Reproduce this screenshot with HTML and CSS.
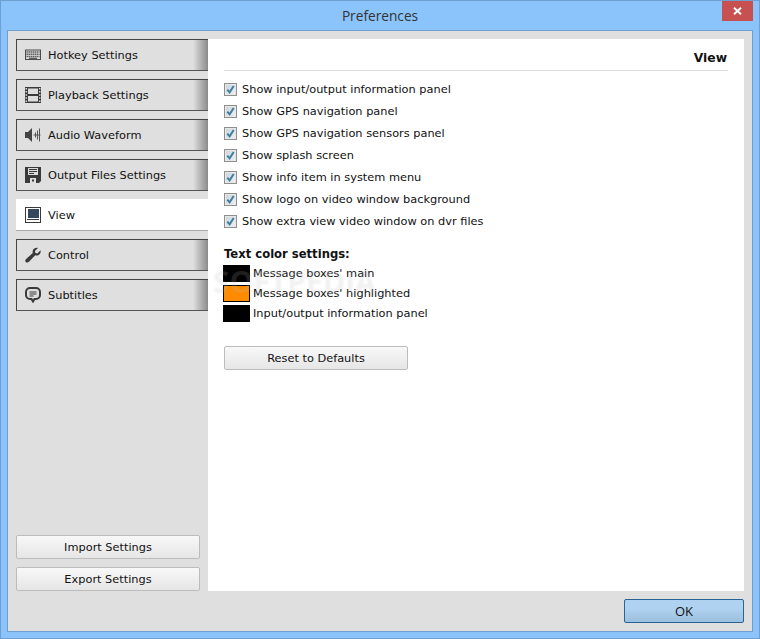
FILE: index.html
```html
<!DOCTYPE html>
<html lang="en">
<head>
<meta charset="utf-8">
<title>Preferences</title>
<link rel="stylesheet" href="styles.css">
</head>
<body>
<div class="window">
  <header class="titlebar">
    <span class="title">Preferences</span>
    <button class="close" aria-label="Close"><svg width="9" height="8" viewBox="0 0 9 8"><path d="M1 .8 L8 7.200 M8 .8 L1 7.200" stroke="#fff" stroke-width="1.900"/></svg></button>
  </header>
  <div class="panel">
    <div class="main">
      <aside class="sidebar">
        <nav class="tabs">
          <div class="tab"><svg class="icon" viewBox="0 0 16 16"><path fill="#4a4a4a" d="M0 2.500h16v10.500H0z"/><path fill="#ddd" d="M1 3.500h14v8.500H1z"/><path stroke="#555" stroke-width="1.500" stroke-dasharray="1.400 .6" d="M1.500 5h13M1.500 7.200h13M1.500 9.400h13"/><path stroke="#555" stroke-width="1.200" d="M4 11.300h8"/></svg><span>Hotkey Settings</span></div>
          <div class="tab"><svg class="icon" viewBox="0 0 16 16"><path fill="#3a3a3a" d="M0 0h16v16H0z"/><path fill="#ddd" d="M3 1.500h10v5.500H3zM3 9h10v5.500H3z"/><path stroke="#ddd" stroke-width="1.500" stroke-dasharray="1.500 1.600" d="M1.300 1v14M14.700 1v14"/></svg><span>Playback Settings</span></div>
          <div class="tab"><svg class="icon" viewBox="0 0 16 16"><path fill="#444" d="M0 5h3l4-4v14l-4-4H0z"/><path stroke="#555" fill="none" d="M8.500 8h7M10.500 5.500v5M12.500 3.500v9M14.500 1.500v13"/></svg><span>Audio Waveform</span></div>
          <div class="tab"><svg class="icon" viewBox="0 0 16 16"><path fill="#3a3a3a" d="M0 0h16v14l-2 2H0z"/><path fill="#ddd" d="M3 1h10v7H3zM5 11h6v5H5z"/><path stroke="#3a3a3a" d="M4 2.500h8M4 4.500h8M4 6.500h5"/><path fill="#3a3a3a" d="M7 12.500h2v2H7z"/></svg><span>Output Files Settings</span></div>
          <div class="tab active"><svg class="icon" viewBox="0 0 16 16"><path fill="#3a3a3a" d="M0 0h16v16H0z"/><path fill="#fff" d="M1 1h14v14H1z"/><path fill="#34495e" d="M3 2h11v9H3z"/><path fill="#3a3a3a" d="M2 12h12v1H2z"/></svg><span>View</span></div>
          <div class="tab"><svg class="icon" viewBox="0 0 16 16"><path fill="#3a3a3a" d="M15.500 3.200c.6 2.300-.4 4.500-2.800 5.200-1 .3-1.800.1-2.500-.1L4 14.800c-1 1-2.400 1-3.200.2s-.7-2 .3-3l6.700-6c-.2-.8-.3-1.700 0-2.600.8-2.100 3-3 5.200-2.400L9.900 3.900l.5 2 2 .5z"/></svg><span>Control</span></div>
          <div class="tab"><svg class="icon" viewBox="0 0 16 16"><path fill="none" stroke="#3a3a3a" stroke-width="2" d="M5 1h6a4 4 0 0 1 4 4v3a4 4 0 0 1-4 4H9.500L8 14.500 6.500 12H5a4 4 0 0 1-4-4V5a4 4 0 0 1 4-4z"/><path stroke="#3a3a3a" d="M4.500 5h7M4.500 7h7M4.500 9h4"/></svg><span>Subtitles</span></div>
        </nav>
        <div class="side-actions">
          <button class="btn">Import Settings</button>
          <button class="btn">Export Settings</button>
        </div>
      </aside>
      <main class="content">
        <h1 class="heading">View</h1>
        <ul class="checks">
          <li><span class="check"><svg viewBox="0 0 9 9" width="9" height="9"><path d="M1.300 4.700 3.600 7.300 7.700 1" fill="none" stroke="#3f7f9f" stroke-width="2"/></svg></span>Show input/output information panel</li>
          <li><span class="check"><svg viewBox="0 0 9 9" width="9" height="9"><path d="M1.300 4.700 3.600 7.300 7.700 1" fill="none" stroke="#3f7f9f" stroke-width="2"/></svg></span>Show GPS navigation panel</li>
          <li><span class="check"><svg viewBox="0 0 9 9" width="9" height="9"><path d="M1.300 4.700 3.600 7.300 7.700 1" fill="none" stroke="#3f7f9f" stroke-width="2"/></svg></span>Show GPS navigation sensors panel</li>
          <li><span class="check"><svg viewBox="0 0 9 9" width="9" height="9"><path d="M1.300 4.700 3.600 7.300 7.700 1" fill="none" stroke="#3f7f9f" stroke-width="2"/></svg></span>Show splash screen</li>
          <li><span class="check"><svg viewBox="0 0 9 9" width="9" height="9"><path d="M1.300 4.700 3.600 7.300 7.700 1" fill="none" stroke="#3f7f9f" stroke-width="2"/></svg></span>Show info item in system menu</li>
          <li><span class="check"><svg viewBox="0 0 9 9" width="9" height="9"><path d="M1.300 4.700 3.600 7.300 7.700 1" fill="none" stroke="#3f7f9f" stroke-width="2"/></svg></span>Show logo on video window background</li>
          <li><span class="check"><svg viewBox="0 0 9 9" width="9" height="9"><path d="M1.300 4.700 3.600 7.300 7.700 1" fill="none" stroke="#3f7f9f" stroke-width="2"/></svg></span>Show extra view video window on dvr files</li>
        </ul>
        <h2 class="subhead">Text color settings:</h2>
        <ul class="colors">
          <li><span class="swatch"></span>Message boxes' main</li>
          <li><span class="swatch orange"></span>Message boxes' highlighted</li>
          <li><span class="swatch"></span>Input/output information panel</li>
        </ul>
        <button class="btn reset">Reset to Defaults</button>
        <div class="watermark">SOFTPEDIA</div>
      </main>
    </div>
    <footer class="footer">
      <button class="ok">OK</button>
    </footer>
  </div>
</div>
</body>
</html>
```
FILE: styles.css
```css
* { box-sizing: border-box; }
html, body { margin: 0; padding: 0; }
body { font-family: "DejaVu Sans", Verdana, sans-serif; font-size: 11.35px; color: #111; }
.window {
  width: 760px; height: 639px;
  background: #8ac4fb;
  border: 1px solid #6f9fd0;
  display: flex; flex-direction: column;
  padding: 0 6px 6px;
}
.titlebar { height: 29px; flex: none; display: flex; align-items: center; justify-content: center; position: relative; }
.title { font-family: "Open Sans", sans-serif; font-size: 13.7px; color: #333; }
.close {
  position: absolute; right: 0; top: 0;
  width: 31px; height: 20px;
  background: #c75050; border: 0; padding: 0;
  display: flex; align-items: center; justify-content: center;
}
.panel {
  flex: 1; min-height: 0;
  background: #dfdfdf;
  border: 1px solid #6f9fd0;
  display: flex; flex-direction: column;
  padding: 8px;
}
.main { flex: 1; min-height: 0; display: flex; }
.sidebar { width: 192px; flex: none; display: flex; flex-direction: column; justify-content: space-between; }
.tabs { display: flex; flex-direction: column; gap: 8px; }
.tab {
  height: 32px; display: flex; align-items: center;
  padding-left: 8px; gap: 7px;
  border: 1px solid #444; border-right: 0;
  border-bottom-color: #555;
  background: linear-gradient(to right, #dfdfdf 0, #dfdfdf 176px, #8a8a8a 191px);
  color: #111;
}
.tab.active { background: #fff; border: 0; border-top: 1px solid #fff; border-bottom: 1px solid #aaa; padding-left: 9px; }
.icon { width: 16px; height: 16px; flex: none; }
.side-actions { display: flex; flex-direction: column; gap: 8px; }
.btn {
  width: 184px; height: 24px;
  font: 11.35px "DejaVu Sans", Verdana, sans-serif; color: #111;
  border: 1px solid #bcbcbc; border-radius: 2px;
  background: linear-gradient(#f8f8f8, #e6e6e6);
  padding: 0;
}
.content { flex: 1; background: #fff; padding: 0 16px; min-width: 0; position: relative; }
.heading {
  margin: 0; height: 32px;
  font-size: 12.3px; font-weight: 700; color: #111;
  text-align: right; line-height: 39px;
  border-bottom: 1px solid #ddd;
  padding-right: 1px;
}
.checks, .colors { list-style: none; margin: 0; padding: 0; }
.checks { margin-top: 7px; }
.checks li { height: 22px; display: flex; align-items: center; gap: 5px; }
.check {
  width: 13px; height: 13px; flex: none;
  border: 1px solid #8f8f8f;
  background: linear-gradient(135deg, #c9d3da, #eef1f3);
  box-shadow: inset 0 0 0 1px #e8e8e8;
  display: flex; align-items: center; justify-content: center;
}
.subhead { margin: 10px 0 0; height: 20px; font-size: 11.6px; font-weight: 700; line-height: 24px; color: #111; }
.colors { margin-top: 1px; }
.colors li { height: 20px; display: flex; align-items: center; gap: 3px; margin-left: -1px; }
.swatch { width: 27px; height: 17px; background: #000; border: 1px solid #000; flex: none; }
.swatch.orange { background: #ff8c00; }
.reset { display: block; margin-top: 23px; }
.watermark {
  position: absolute; left: 5px; top: 222px;
  font: 700 30px "Open Sans", sans-serif;
  color: rgba(255,255,255,.12);
  text-shadow: 0 0 2px rgba(0,0,0,.06);
  pointer-events: none;
}
.footer { flex: none; height: 32px; display: flex; justify-content: flex-end; align-items: flex-end; }
.ok {
  width: 120px; height: 24px;
  font: 13px "Open Sans", sans-serif; color: #111;
  border: 1px solid #2a6496; border-radius: 2px;
  background: linear-gradient(#aed2ef 0, #aed2ef 40%, #9bbfdc 100%);
  padding: 0;
}
```
